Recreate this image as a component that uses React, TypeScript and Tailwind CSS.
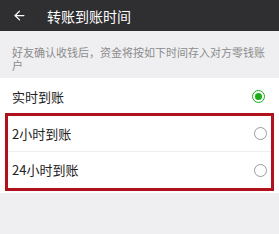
import { ArrowLeft } from "lucide-react";

const font = { fontFamily: '"Noto Sans CJK SC", "Noto Sans", sans-serif' };

function Radio({ checked }: { checked?: boolean }) {
  if (checked) {
    return (
      <span className="flex h-[13px] w-[13px] items-center justify-center rounded-full border-[1.5px] border-[#1aad19]">
        <span className="h-[7px] w-[7px] rounded-full bg-[#1aad19]" />
      </span>
    );
  }
  return <span className="h-[13px] w-[13px] rounded-full border border-[#9a9a9a]" />;
}

export default function App() {
  return (
    <div className="flex h-[234px] w-[279px] flex-col bg-[#efeff2]" style={font}>
      <div className="flex h-[31px] items-center bg-[#2f2f31] pl-[12px] text-white">
        <ArrowLeft size={15} strokeWidth={2} />
        <span className="ml-[20px] text-[14px] leading-none">转账到账时间</span>
      </div>

      <p className="px-3 pb-[6px] pt-[15px] text-[11px] leading-[13px] text-[#8c8c8c]">
        好友确认收钱后，资金将按如下时间存入对方零钱账户
      </p>

      <div className="bg-white pb-[2px]">
        <div className="flex h-[35px] items-center justify-between pl-3 pr-[14px] pt-[2px] text-[13px] text-[#222]">
          <span>实时到账</span>
          <Radio checked />
        </div>
        <div className="mx-[5px] border-[3px] border-[#b0121c]">
          <div className="flex h-[36px] items-center justify-between border-b border-[#eeeeee] pl-[4px] pr-[4px] text-[13px] text-[#222]">
            <span>2小时到账</span>
            <Radio />
          </div>
          <div className="flex h-[36px] items-center justify-between pl-[4px] pr-[4px] text-[13px] text-[#222]">
            <span>24小时到账</span>
            <Radio />
          </div>
        </div>
      </div>
    </div>
  );
}
